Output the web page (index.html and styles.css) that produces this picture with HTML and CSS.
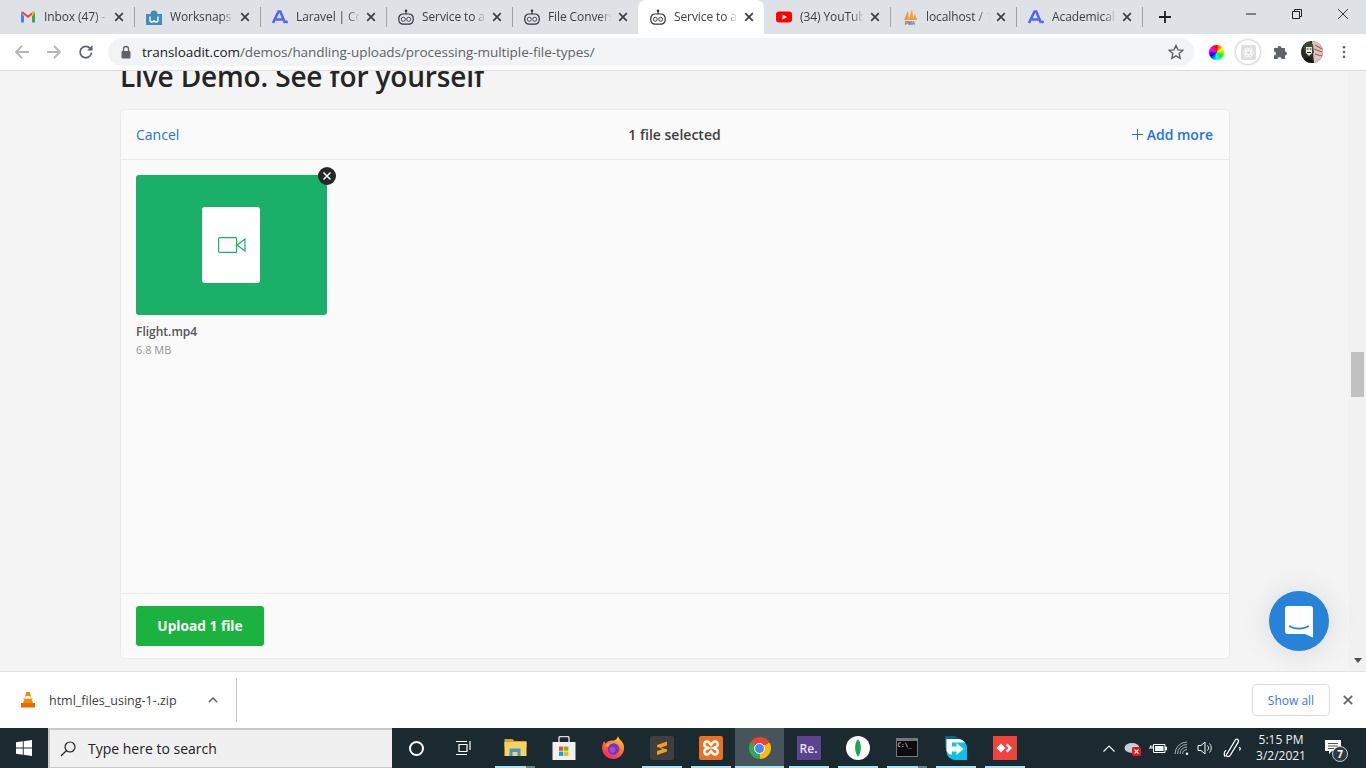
FILE: index.html
```html
<!DOCTYPE html>
<html lang="en">
<head>
<meta charset="utf-8">
<title>Service to a</title>
<link rel="stylesheet" href="styles.css">
</head>
<body>
<svg class="defs" width="0" height="0" aria-hidden="true">
  <defs>
    <linearGradient id="ffg" x1=".8" y1="0" x2=".3" y2="1"><stop offset="0" stop-color="#ffd53a"/><stop offset=".45" stop-color="#ff7a2b"/><stop offset="1" stop-color="#f5206f"/></linearGradient>
    <clipPath id="avclip"><circle cx="11" cy="11" r="11"/></clipPath>
  </defs>
  <symbol id="robot" viewBox="0 0 16 16">
    <rect x=".8" y="5" width="14.400" height="10.200" rx="4.200" fill="none" stroke="#333" stroke-width="1.200"/>
    <path d="M8 2v3" stroke="#333" stroke-width="1.200"/>
    <circle cx="8" cy="1.800" r="1.300" fill="#333"/>
    <circle cx="5.300" cy="10.300" r="2" fill="#eee" stroke="#444" stroke-width="1"/>
    <circle cx="10.700" cy="10.300" r="2" fill="#eee" stroke="#444" stroke-width="1"/>
  </symbol>
  <symbol id="alogo" viewBox="0 0 16 16">
    <path d="M1 14 6.500 2.500h1.800L13 14M3.800 10.500h7" fill="none" stroke="#5664f5" stroke-width="2.600"/>
    <circle cx="14.600" cy="13" r="1.400" fill="#5664f5"/>
  </symbol>
  <symbol id="xmark" viewBox="0 0 10 10">
    <path d="M1.200 1.200l7.600 7.600M8.800 1.200l-7.600 7.600" stroke="#3c4043" stroke-width="1.700" fill="none"/>
  </symbol>
</svg>

<header class="tabstrip">
  <div class="tab sep">
    <svg class="fav" viewBox="0 0 16 16"><path d="M1 3.500v10h3V7z" fill="#4285f4"/><path d="M15 3.500v10h-3V7z" fill="#34a853"/><path d="M1 3.500 8 9l7-5.500-1.500-1.200L8 6.500 2.500 2.300z" fill="#ea4335"/><path d="M12 7l3-3.500-1.500-1.200L12 3.500z" fill="#fbbc04"/></svg>
    <span class="tab-title">Inbox (47) - sunny</span>
    <svg class="tab-x"><use href="#xmark"/></svg>
  </div>
  <div class="tab sep">
    <svg class="fav" viewBox="0 0 16 16"><path d="M0 5h4.500a3.500 3.500 0 0 1 7 0H16v11H0z" fill="#3f8fb5"/><path d="M4 7.500v3.500a1.500 1.500 0 0 0 4 0 1.500 1.500 0 0 0 4 0V7.500" fill="none" stroke="#fff" stroke-width="1.300"/></svg>
    <span class="tab-title">Worksnaps - Time</span>
    <svg class="tab-x"><use href="#xmark"/></svg>
  </div>
  <div class="tab sep">
    <svg class="fav"><use href="#alogo"/></svg>
    <span class="tab-title">Laravel | Code</span>
    <svg class="tab-x"><use href="#xmark"/></svg>
  </div>
  <div class="tab sep">
    <svg class="fav"><use href="#robot"/></svg>
    <span class="tab-title">Service to a file</span>
    <svg class="tab-x"><use href="#xmark"/></svg>
  </div>
  <div class="tab">
    <svg class="fav"><use href="#robot"/></svg>
    <span class="tab-title">File Conversion</span>
    <svg class="tab-x"><use href="#xmark"/></svg>
  </div>
  <div class="tab active">
    <svg class="fav"><use href="#robot"/></svg>
    <span class="tab-title">Service to a file</span>
    <svg class="tab-x"><use href="#xmark"/></svg>
  </div>
  <div class="tab sep">
    <svg class="fav" viewBox="0 0 16 16"><rect y="2.500" width="16" height="11" rx="3" fill="#f00"/><path d="M6.500 5.500v5L11 8z" fill="#fff"/></svg>
    <span class="tab-title">(34) YouTube</span>
    <svg class="tab-x"><use href="#xmark"/></svg>
  </div>
  <div class="tab sep">
    <svg class="fav" viewBox="0 0 16 16"><path d="M2 11 6 1.500l1 9.500zM7 11l3-11 1.500 11zM11 11l2-6.500L15 11z" fill="#f29a2e"/><text x="8" y="15.500" class="pma">PMA</text></svg>
    <span class="tab-title">localhost / 127</span>
    <svg class="tab-x"><use href="#xmark"/></svg>
  </div>
  <div class="tab sep">
    <svg class="fav"><use href="#alogo"/></svg>
    <span class="tab-title">Academical.</span>
    <svg class="tab-x"><use href="#xmark"/></svg>
  </div>
  <svg class="newtab" viewBox="0 0 12 12"><path d="M6 0v12M0 6h12" stroke="#202124" stroke-width="1.800"/></svg>
  <div class="winctl">
    <div class="winbtn"><svg viewBox="0 0 10 10"><path d="M0 5h10" stroke="#202124"/></svg></div>
    <div class="winbtn"><svg viewBox="0 0 10 10"><path d="M.5 2.500h7v7h-7zM2.500 2.500v-2h7v7h-2" fill="none" stroke="#202124"/></svg></div>
    <div class="winbtn"><svg viewBox="0 0 10 10"><path d="M0 0l10 10M10 0 0 10" stroke="#202124" stroke-width=".9"/></svg></div>
  </div>
</header>

<nav class="toolbar">
  <div class="tool"><svg viewBox="0 0 16 16"><path d="M15 8H2M8 2 2 8l6 6" fill="none" stroke="#b4b6b9" stroke-width="1.800"/></svg></div>
  <div class="tool"><svg viewBox="0 0 16 16"><path d="M1 8h13M8 2l6 6-6 6" fill="none" stroke="#b4b6b9" stroke-width="1.800"/></svg></div>
  <div class="tool"><svg viewBox="0 0 16 16"><path d="M13.500 8.500A5.700 5.700 0 1 1 12 4.200" fill="none" stroke="#5f6368" stroke-width="1.800"/><path d="M14.500 1v5.500H9z" fill="#5f6368"/></svg></div>
  <div class="omnibox">
    <svg class="lock" viewBox="0 0 12 14"><path d="M3.500 6V4a2.500 2.500 0 0 1 5 0v2" fill="none" stroke="#5f6368" stroke-width="1.300"/><rect x="1.500" y="6" width="9" height="7.500" rx="1" fill="#5f6368"/></svg>
    <span class="url"><span class="host">transloadit.com</span>/demos/handling-uploads/processing-multiple-file-types/</span>
    <svg class="star" viewBox="0 0 16 16"><path d="M8 1.500l2 4.400 4.800.5-3.600 3.200 1 4.700L8 11.900l-4.200 2.400 1-4.700-3.600-3.200 4.800-.5z" fill="none" stroke="#5f6368" stroke-width="1.400"/></svg>
  </div>
  <div class="exts">
    <div class="tool"><span class="wheel"></span></div>
    <div class="tool"><span class="reactext"><span class="reactbox"><svg viewBox="0 0 16 16"><g fill="none" stroke="#fff"><ellipse cx="8" cy="8" rx="6.500" ry="2.600"/><ellipse cx="8" cy="8" rx="6.500" ry="2.600" transform="rotate(60 8 8)"/><ellipse cx="8" cy="8" rx="6.500" ry="2.600" transform="rotate(120 8 8)"/></g></svg></span></span></div>
    <div class="tool"><svg viewBox="0 0 16 16"><path d="M1 4.500h3.500a2 2 0 0 1 4 0H12V8a2 2 0 0 1 0 4v3.500H8.500a2 2 0 0 0-4 0H1V12a2 2 0 0 0 0-4z" fill="#5f6368" transform="translate(1 -.5)"/></svg></div>
    <div class="tool"><svg class="avatar" viewBox="0 0 22 22"><g clip-path="url(#avclip)"><rect width="22" height="22" fill="#2a2a28"/><path d="M11 0h11v22H13z" fill="#d9c5c5"/><path d="M14 4l7 4M13 8l8 3M14 13l7 2" stroke="#b3565a" stroke-width="1.200"/><path d="M2 4c2-3 8-4 10 0l1 8-3 2-3-3-3 1z" fill="#39493a"/><path d="M5 6h6v6l-3 3-3-3z" fill="#e9e7e2"/><path d="M5.800 8h1.600M8.800 8h1.600M6 11.500h4" stroke="#222" stroke-width="1"/><path d="M1 22l3-6 5 0 4 6z" fill="#161616"/></g></svg></div>
    <div class="tool"><svg class="dots" viewBox="0 0 4 16"><circle cx="2" cy="2.500" r="1.500" fill="#5f6368"/><circle cx="2" cy="8" r="1.500" fill="#5f6368"/><circle cx="2" cy="13.500" r="1.500" fill="#5f6368"/></svg></div>
  </div>
</nav>

<main class="viewport">
  <section class="page">
    <h2 class="demo-title">Live Demo. See for yourself</h2>
    <div class="card">
      <div class="card-head">
        <a class="link">Cancel</a>
        <span class="count">1 file selected</span>
        <a class="link add"><svg viewBox="0 0 11 11"><path d="M5.500 0v11M0 5.500h11" stroke="#2275d7" stroke-width="1"/></svg>Add more</a>
      </div>
      <div class="card-body">
        <div class="file">
          <div class="tile">
            <div class="doc">
              <svg viewBox="0 0 28 16"><rect x=".6" y=".6" width="18" height="14.800" rx="1" fill="none" stroke="#1bb06a" stroke-width="1.200"/><path d="M19 8l8-6v12z" fill="none" stroke="#1bb06a" stroke-width="1.200"/></svg>
            </div>
            <span class="remove"><svg viewBox="0 0 10 10"><path d="M1.500 1.500l7 7M8.500 1.500l-7 7" stroke="#fff" stroke-width="1.500"/></svg></span>
          </div>
          <div class="file-name">Flight.mp4</div>
          <div class="file-size">6.8 MB</div>
        </div>
      </div>
      <div class="card-foot">
        <button class="upload">Upload 1 file</button>
      </div>
    </div>
    <div class="chat">
      <svg viewBox="0 0 28 32"><path d="M3 0h22a3 3 0 0 1 3 3v28.500L20 28H3a3 3 0 0 1-3-3V3a3 3 0 0 1 3-3z" fill="#fff"/><path d="M4 20c6 3.500 14 3.500 20 0" fill="none" stroke="#2783d8" stroke-width="1.800"/></svg>
    </div>
  </section>
  <aside class="scrollbar">
    <div class="sb-thumb"></div>
    <svg class="sb-down" viewBox="0 0 8 5"><path d="M0 0l4 5 4-5z" fill="#505050"/></svg>
  </aside>
</main>

<footer class="downloads">
  <svg class="vlc" viewBox="0 0 14 16"><path d="M5.200 0h3.600l3 11H2.200z" fill="#f48b00"/><path d="M4.500 4h5l.7 2.800H3.800z" fill="#eee"/><path d="M0 11h14v4.500H0z" fill="#e56a00"/></svg>
  <span class="dl-name">html_files_using-1-.zip</span>
  <svg class="dl-chev" viewBox="0 0 10 6"><path d="M.8 5.200 5 1l4.200 4.200" fill="none" stroke="#5f6368" stroke-width="1.500"/></svg>
  <span class="dl-sep"></span>
  <button class="showall">Show all</button>
  <svg class="dl-x" viewBox="0 0 10 10"><path d="M.8.800l8.400 8.400M9.200.800.800 9.200" stroke="#5f6368" stroke-width="1.700"/></svg>
</footer>

<div class="taskbar">
  <div class="start"><svg viewBox="0 0 16 16"><path d="M0 2.300 6.800 1.300V7.500H0zM7.700 1.200 16 0v7.500H7.700zM0 8.400h6.800v6.300L0 13.700zM7.700 8.400H16V16l-8.300-1.200z" fill="#fff"/></svg></div>
  <div class="search">
    <svg viewBox="0 0 16 16"><circle cx="10" cy="6" r="5" fill="none" stroke="#222" stroke-width="1.200"/><path d="M6.500 9.500 1 15" stroke="#222" stroke-width="1.300"/></svg>
    <span>Type here to search</span>
  </div>
  <div class="tb-fixed"><span class="cortana"></span></div>
  <div class="tb-fixed"><svg class="tb-svg" viewBox="0 0 16 16"><path d="M3 4.500h8v7H3zM0 1.500h11M0 14.500h11M14 1v9" fill="none" stroke="#fff" stroke-width="1.200"/></svg></div>
  <div class="apps">
    <div class="app"><svg class="ic" viewBox="0 0 24 24"><path d="M1.500 3h8l2 2h12v6h-22z" fill="#d9a22c"/><path d="M1.500 6h22v14h-22z" fill="#fcd25f"/><path d="M6.500 20v-7.500h11V20h-3v-4h-5v4z" fill="#3e97d8"/></svg><span class="bar"><span class="bar-tip"></span></span></div>
    <div class="app"><svg class="ic" viewBox="0 0 24 24"><path d="M7 6V2a1.500 1.500 0 0 1 1.500-1.500h7A1.500 1.500 0 0 1 17 2v4" fill="none" stroke="#ddd" stroke-width="1.400"/><path d="M.5 6h23v18H.5z" fill="#f1f1f1"/><path d="M7 10.500h4.300v4.300H7z" fill="#f25022"/><path d="M12.100 10.500h4.300v4.300h-4.300z" fill="#7fba00"/><path d="M7 15.600h4.300v4.300H7z" fill="#00a4ef"/><path d="M12.100 15.600h4.300v4.300h-4.300z" fill="#ffb900"/></svg><span class="bar none"></span></div>
    <div class="app"><svg class="ic" viewBox="0 0 24 24"><path d="M17 0c.5 3 4 4.500 5.500 8.500A11 11 0 1 1 1.500 9C2 7.500 2.500 6 3.500 5c0 1.200.5 2 1.200 2.500C6 5.500 8.500 4.500 11 4.500c2 0 3.500-.5 4.500-1.500.7-.8 1.300-2 1.500-3z" fill="url(#ffg)"/><circle cx="12.500" cy="13" r="5.800" fill="#6f35c4"/><circle cx="11.500" cy="13.800" r="3" fill="#a04bd8"/><path d="M4 10c2-2.500 5-3.500 8-2.500-2.500 0-4 1.500-4.500 3.500C6.500 10.500 5 10 4 10z" fill="#ff9a2e"/></svg><span class="bar none"></span></div>
    <div class="app"><svg class="ic" viewBox="0 0 24 24"><rect width="24" height="24" rx="2" fill="#3f3f3f"/><path d="M7 9 17 5.500v4L11 11.500l6 2v2L7 19v-4l6-2-6-2z" fill="#f89a1c"/></svg><span class="bar"></span></div>
    <div class="app"><svg class="ic" viewBox="0 0 24 24"><rect width="24" height="24" rx="2" fill="#e9711f"/><path d="M8 5.500a2.800 2.800 0 0 0-1 5.400L9.500 12 7 13.100A2.800 2.800 0 1 0 10.500 17l1.500-1.800 1.500 1.800a2.800 2.800 0 1 0 3.500-3.900L14.500 12 17 10.900A2.800 2.800 0 1 0 13.500 7L12 8.800 10.500 7A2.800 2.800 0 0 0 8 5.500z" fill="none" stroke="#fff" stroke-width="2.500"/></svg><span class="bar"></span></div>
    <div class="app current"><span class="chrome"><span class="chrome-core"></span></span><span class="bar"></span></div>
    <div class="app"><span class="re">Re.</span><span class="bar"></span></div>
    <div class="app"><svg class="ic" viewBox="0 0 22 22"><circle cx="11" cy="11" r="11" fill="#fff"/><path d="M11 3c3.500 3 3.500 12 0 16-3.500-4-3.500-13 0-16z" fill="#13aa52"/></svg><span class="bar"></span></div>
    <div class="app"><span class="cmd"><span class="cmd-txt">C:\_</span></span><span class="bar"><span class="bar-tip"></span></span></div>
    <div class="app"><svg class="ic" viewBox="0 0 24 24"><path d="M1 1a1 1 0 0 1 1-1h9l6 4H3v8H1z" fill="#0f5f86"/><path d="M2.500 3H14a9 9 0 0 1 9 9v12H11a8.500 8.500 0 0 1-8.500-8.500z" fill="#0cc3e7"/><path d="M2.500 3H14a9 9 0 0 1 7 3.500H8v6H2.500zM2.500 12.500H8V19a8 8 0 0 1-5.500-4z" fill="#fff"/><path d="M6 10.500h6.500V7l7 6-7 6v-3.500H6z" fill="#fff"/></svg><span class="bar"></span></div>
    <div class="app"><svg class="ic" viewBox="0 0 24 24"><rect width="24" height="24" fill="#ef443b"/><path d="M8 7.500l4.500 4.500L8 16.500 3.500 12zM14.500 7.500 19 12l-4.500 4.500-1.700-1.700L15.500 12l-2.700-2.800z" fill="#fff"/></svg><span class="bar"></span></div>
  </div>
  <div class="tray">
    <div class="tray-cell w24"><svg viewBox="0 0 12 7" class="t12"><path d="M.5 6.500 6 1l5.500 5.500" fill="none" stroke="#fff" stroke-width="1.100"/></svg></div>
    <div class="tray-cell w24"><svg viewBox="0 0 18 16" class="t18"><ellipse cx="8" cy="8" rx="7.500" ry="5" fill="#c9ced0"/><rect x="8" y="7" width="9" height="9" rx="1.500" fill="#e81123"/><path d="M10.500 9.500l4 4M14.500 9.500l-4 4" stroke="#fff" stroke-width="1.100"/></svg></div>
    <div class="tray-cell w25"><svg viewBox="0 0 18 12" class="t18"><path d="M4.500 2.500h11.500v8H4.500z" fill="none" stroke="#fff"/><rect x="6" y="4" width="8.500" height="5" fill="#fff"/><path d="M16.500 5v3h1V5zM0 6h4M1.500 3.500v2M3 3.500v2" stroke="#fff" fill="none"/></svg></div>
    <div class="tray-cell w24"><svg viewBox="0 0 16 14" class="t16"><path d="M1 13A12 12 0 0 1 13 1M3.500 13A9.500 9.500 0 0 1 13 3.500M6 13a7 7 0 0 1 7-7M8.500 13A4.500 4.500 0 0 1 13 8.500" fill="none" stroke="#b9bec0" stroke-width=".9"/><circle cx="13" cy="12.800" r="1.200" fill="#fff"/></svg></div>
    <div class="tray-cell w21"><svg viewBox="0 0 16 14" class="t16"><path d="M1 4.500h3L8 1v12L4 9.500H1z" fill="none" stroke="#fff"/><path d="M10.500 4.500a3.500 3.500 0 0 1 0 5M12.500 2.500a6.500 6.500 0 0 1 0 9" fill="none" stroke="#fff" stroke-width=".9"/></svg></div>
    <div class="tray-cell w36"><svg viewBox="0 0 16 18" class="pen"><path d="M11.500 1c1.500 0 2 1.500 1.300 2.800L6 15c-.8 1.300-3 1.200-3.500 0L9.500 3.200c.5-1 1-2.200 2-2.200zM13.500 8c1.500 0 1.500 2 .2 2.500M2.500 10.500c-1.500 1-2 3-1 5.500" fill="none" stroke="#fff" stroke-width="1.100"/></svg></div>
    <div class="clock"><span>5:15 PM</span><span>3/2/2021</span></div>
    <div class="notify">
      <svg viewBox="0 0 16 14" class="t16"><path d="M0 0h16v11H7l-3 3v-3H0z" fill="#fff"/><path d="M3 3.500h10M3 6h10M3 8.500h6" stroke="#1a2a30" stroke-width=".8"/></svg>
      <span class="badge">7</span>
    </div>
  </div>
</div>
</body>
</html>
```
FILE: styles.css
```css
* { box-sizing: border-box; }
html, body { margin: 0; height: 100%; }
body {
  width: 1366px; height: 768px; overflow: hidden;
  display: flex; flex-direction: column;
  font-family: "Open Sans", "Liberation Sans", sans-serif;
  background: #fff; color: #202124;
}
svg { display: block; flex: none; }
.defs { position: absolute; }

/* Tab strip */
.tabstrip { height: 34px; flex: none; display: flex; align-items: stretch; padding-left: 8px; background: #dee1e6; }
.tab { width: 126px; flex: none; display: flex; align-items: center; padding-left: 12px; position: relative; }
.tab.sep::after { content: ""; position: absolute; right: -1px; top: 7px; width: 1px; height: 20px; background: #9ea1a6; }
.tab.active { background: #fff; border-radius: 8px 8px 0 0; }
.fav { width: 16px; height: 16px; }
.pma { font: 700 4.500px "Liberation Sans", sans-serif; fill: #56617e; text-anchor: middle; }
.tab-title {
  width: 64px; margin-left: 8px; font-size: 12px; line-height: 16px; color: #3c4043;
  white-space: nowrap; overflow: hidden; letter-spacing: -.1px;
  -webkit-mask-image: linear-gradient(to right, #000 80%, transparent 100%);
  mask-image: linear-gradient(to right, #000 80%, transparent 100%);
}
.tab-x { width: 10px; height: 10px; margin-left: 6px; }
.newtab { width: 12px; height: 12px; margin: 11px 0 0 17px; }
.winctl { margin-left: auto; display: flex; }
.winbtn { width: 46px; display: flex; justify-content: center; padding-top: 9px; }
.winbtn svg { width: 10px; height: 10px; }

/* Toolbar */
.toolbar { height: 37px; flex: none; display: flex; align-items: flex-start; padding: 4px 0 0 6px; background: #fff; border-bottom: 1px solid #dadce0; }
.tool { width: 32px; height: 28px; flex: none; display: flex; align-items: center; justify-content: center; }
.tool svg { width: 16px; height: 16px; }
.tool .dots { width: 4px; height: 14px; }
.tool .avatar { width: 22px; height: 22px; }
.omnibox { width: 1086px; height: 28px; margin-left: 6px; flex: none; display: flex; align-items: center; padding: 0 10px 0 12px; background: #f1f3f4; border-radius: 14px; }
.lock { width: 12px; height: 14px; }
.url { margin-left: 10px; font-size: 13.500px; color: #5f6368; white-space: nowrap; letter-spacing: -.05px; }
.host { color: #202124; }
.star { width: 16px; height: 16px; margin-left: auto; }
.exts { display: flex; margin-left: 6px; }
.wheel { width: 15px; height: 15px; border-radius: 50%; background: conic-gradient(#f00, #ff0, #0f0, #0ff, #00f, #f0f, #f00); box-shadow: 0 0 1px rgba(0,0,0,.6); }
.reactext { width: 24px; height: 24px; border-radius: 50%; background: #fff; box-shadow: 0 0 3px rgba(0,0,0,.4); display: flex; align-items: center; justify-content: center; }
.reactbox { width: 15px; height: 15px; border-radius: 2px; background: #dedede; display: flex; align-items: center; justify-content: center; }
.tool .reactbox svg { width: 13px; height: 13px; }

/* Page */
.viewport { height: 600px; flex: none; display: flex; overflow: hidden; }
.page { flex: 1; padding: 0 119px 0 120px; background: #f4f4f4; position: relative; }
.demo-title { margin: -14px 0 2px; height: 50px; font-size: 28px; line-height: 38px; font-weight: 600; letter-spacing: -.15px; color: #252525; white-space: nowrap; }
.card { height: 550px; display: flex; flex-direction: column; background: #fafafa; border: 1px solid #eaeaea; border-radius: 5px; }
.card-head { height: 50px; flex: none; display: grid; grid-template-columns: 1fr auto 1fr; align-items: center; padding: 0 16px 0 15px; border-bottom: 1px solid #eaeaea; font-size: 14px; }
.link { color: #2275d7; }
.count { font-weight: 600; color: #3f3f3f; }
.add { display: flex; align-items: center; justify-content: flex-end; font-weight: 600; }
.add svg { width: 11px; height: 11px; margin-right: 4px; }
.card-body { flex: 1; padding: 15px; }
.file { width: 191px; }
.tile { height: 140px; display: flex; align-items: center; justify-content: center; padding-right: 1px; background: #1bb06a; border-radius: 3px; position: relative; }
.doc { width: 58px; height: 76px; display: flex; align-items: center; justify-content: center; background: #fff; border-radius: 3px; }
.doc svg { width: 28px; height: 16px; margin-left: 1px; }
.remove { position: absolute; right: -9px; top: -8px; width: 18px; height: 18px; border-radius: 50%; background: #272727; display: flex; align-items: center; justify-content: center; }
.remove svg { width: 10px; height: 10px; }
.file-name { margin-top: 9px; font-size: 12px; line-height: 16px; font-weight: 600; color: #555; }
.file-size { margin-top: 2px; font-size: 11px; line-height: 15px; color: #939393; }
.card-foot { height: 65px; flex: none; padding: 12px 15px; border-top: 1px solid #eaeaea; }
.upload { width: 128px; height: 40px; padding: 0 0 2px; border: 0; border-radius: 3px; background: #1bb240; color: #fff; font: 700 13.700px "Open Sans", sans-serif; }
.chat { position: absolute; left: 1269px; top: 520px; width: 60px; height: 60px; border-radius: 50%; background: #2783d8; box-shadow: 0 1px 30px rgba(0,0,0,.12); display: flex; align-items: center; justify-content: center; }
.chat svg { width: 28px; height: 32px; margin-top: 1px; }
.scrollbar { width: 17px; flex: none; display: flex; flex-direction: column; align-items: center; background: #f1f1f1; }
.sb-thumb { width: 13px; height: 45px; margin-top: 281px; background: #c1c1c1; }
.sb-down { width: 8px; height: 5px; margin-top: auto; margin-bottom: 8px; }

/* Download bar */
.downloads { height: 57px; flex: none; display: flex; align-items: center; padding-left: 21px; background: #fff; border-top: 1px solid #e3e3e3; }
.vlc { width: 14px; height: 16px; }
.dl-name { margin-left: 14px; width: 136px; font-size: 12.500px; color: #3c4043; white-space: nowrap; }
.dl-chev { width: 10px; height: 6px; margin-left: 23px; }
.dl-sep { width: 1px; height: 44px; margin-left: 18px; background: #c9cacc; }
.showall { width: 78px; height: 32px; margin-left: auto; padding: 0; background: #fff; border: 1px solid #dadce0; border-radius: 4px; color: #3a78e0; font: 500 12px "Open Sans", sans-serif; }
.dl-x { width: 10px; height: 10px; margin: 0 13px; }

/* Taskbar */
.taskbar { height: 40px; flex: none; display: flex; background: #1a2a30; color: #fff; }
.start { width: 48px; display: flex; align-items: center; justify-content: center; }
.start svg { width: 16px; height: 16px; }
.search { width: 344px; display: flex; align-items: center; padding-left: 10px; background: #f0f0f0; border: 2px solid #c9c9c9; border-right: 0; border-bottom: 1px solid #c9c9c9; color: #222; font-size: 14px; }
.search svg { width: 16px; height: 16px; }
.search span { margin-left: 12px; }
.tb-fixed { width: 48px; display: flex; align-items: center; justify-content: center; }
.cortana { width: 15px; height: 15px; border: 2px solid #fff; border-radius: 50%; }
.tb-svg { width: 16px; height: 16px; }
.apps { display: flex; margin-left: 2px; }
.app { width: 49px; display: flex; flex-direction: column; align-items: center; justify-content: space-between; padding-top: 8px; }
.app.current { background: #46555b; }
.ic { width: 24px; height: 24px; }
.bar { width: 40px; height: 2px; background: #a5e6f5; display: flex; justify-content: flex-end; }
.bar.none { background: transparent; }
.bar-tip { width: 9px; background: #61878f; }
.current .bar { width: 49px; }
.chrome { width: 22px; height: 22px; margin-top: 1px; border-radius: 50%; background: conic-gradient(from -60deg, #ea4335 0 120deg, #fbbc04 120deg 240deg, #34a853 240deg); display: flex; align-items: center; justify-content: center; }
.chrome-core { width: 11px; height: 11px; border-radius: 50%; background: #4e86ee; border: 1.500px solid #fff; }
.re { width: 24px; height: 24px; display: flex; align-items: center; justify-content: center; background: #5a4390; font-size: 12px; font-weight: 600; color: #e8e4f2; }
.cmd { width: 22px; height: 19px; margin-top: 2px; background: #0c0c0c; border: 1px solid #777; border-top-width: 3px; font: 6px/8px "DejaVu Sans Mono", monospace; color: #eee; padding-left: 1px; }
.cmd-txt { display: block; }
.tray { margin-left: auto; display: flex; align-items: center; }
.tray-cell { height: 40px; display: flex; align-items: center; justify-content: center; }
.w24 { width: 24px; } .w25 { width: 25px; } .w21 { width: 21px; } .w36 { width: 35px; }
.t12 { width: 12px; height: 7px; }
.t18 { width: 18px; height: 16px; }
.t16 { width: 16px; height: 16px; }
.pen { width: 19px; height: 21px; }
.clock { width: 62px; display: flex; flex-direction: column; align-items: center; font-size: 12px; line-height: 16px; color: #eef1f2; }
.notify { width: 54px; height: 40px; padding: 11px 0 0 13px; position: relative; }
.badge { position: absolute; left: 20px; top: 18px; width: 16px; height: 16px; border-radius: 50%; background: #2f3b40; border: 1px solid #c8c8c8; font-size: 10px; line-height: 14px; font-weight: 700; text-align: center; color: #fff; }
```
